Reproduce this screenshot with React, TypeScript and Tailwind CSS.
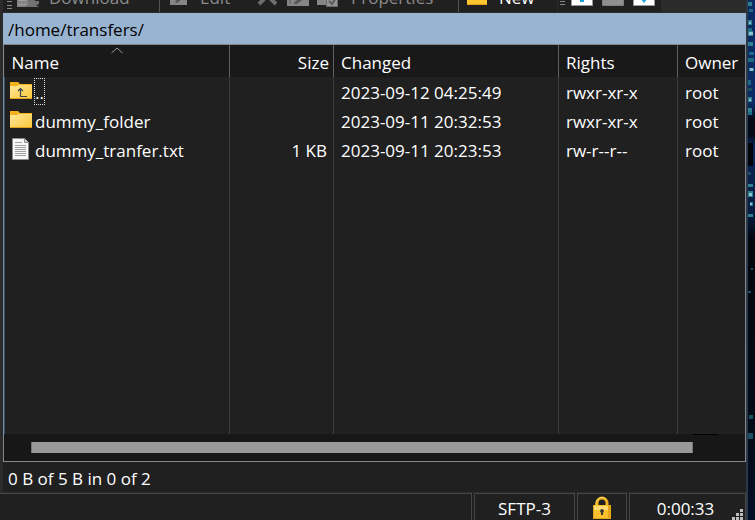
import type { ReactNode } from "react";

type Entry = {
  name: string;
  kind: "parent" | "folder" | "file";
  size: string;
  changed: string;
  rights: string;
  owner: string;
};

const entries: Entry[] = [
  { name: "..", kind: "parent", size: "", changed: "2023-09-12 04:25:49", rights: "rwxr-xr-x", owner: "root" },
  { name: "dummy_folder", kind: "folder", size: "", changed: "2023-09-11 20:32:53", rights: "rwxr-xr-x", owner: "root" },
  { name: "dummy_tranfer.txt", kind: "file", size: "1 KB", changed: "2023-09-11 20:23:53", rights: "rw-r--r--", owner: "root" },
];

const FolderIcon = ({ up = false }: { up?: boolean }) => (
  <svg width="22" height="22" viewBox="0 -3 22 22" className="mt-px shrink-0" aria-hidden="true">
    <defs>
      <linearGradient id="folder" x1="0" y1="0" x2="1" y2="1">
        <stop offset="0" stopColor="#ffe79b" />
        <stop offset="1" stopColor="#fbc938" />
      </linearGradient>
    </defs>
    <path d="M0 0h8l2 2h12v4H0z" fill="#f5b21a" />
    <path d="M0 4h7l2-1h13v14H0z" fill="url(#folder)" />
    <path d="M0 16h22v1H0z" fill="#e0a21c" />
    {up && <path d="M10.500 6.500v8h6.500M8 9l2.500-2.500L13 9" fill="none" stroke="#3d4250" strokeWidth="1.200" />}
  </svg>
);

const FileIcon = () => (
  <svg width="22" height="22" viewBox="0 0 22 22" className="mt-[2px] shrink-0" aria-hidden="true">
    <path d="M2.500.5h12l4 4v17h-16z" fill="#f7f7f7" stroke="#8c8c8c" />
    <path d="M14.500.5v4h4" fill="#d5d5d5" stroke="#8c8c8c" />
    <path d="M5 4.500h7M5 7.500h11M5 9.500h11M5 11.500h11M5 13.500h11M5 15.500h11M5 17.500h11" stroke="#a0a0a0" />
  </svg>
);

const LockIcon = () => (
  <svg width="18" height="24" viewBox="0 0 18 24" role="img" aria-label="Secure connection">
    <path d="M4 11V7a5 5 0 0 1 10 0v4" fill="none" stroke="#efb11c" strokeWidth="3" />
    <path d="M3 10V7a6 6 0 0 1 10-4" fill="none" stroke="#ffd768" />
    <path d="M0 9h18v14H0z" fill="#fbc22b" />
    <path d="M1 10h16v4H1z" fill="#ffda70" />
    <path d="M0 9h1v14H0zM15 9h3v14h-3zM0 22h18v1H0z" fill="#e5a51b" />
    <path d="M9 13a2 2 0 0 1 1 3.700V19H8v-2.300A2 2 0 0 1 9 13z" fill="#3b3a35" />
  </svg>
);

const Grip = () => (
  <svg width="5" height="12" viewBox="0 0 5 12" className="shrink-0" aria-hidden="true">
    <path d="M0 3.500h5M0 7.500h5M0 10.500h5" stroke="#868686" />
  </svg>
);

const ToolButton = ({ icon, children }: { icon: ReactNode; children?: ReactNode }) => (
  <button type="button" className="flex shrink-0 items-end whitespace-nowrap">
    {icon}
    {children}
  </button>
);

const Toolbar = () => (
  <div className="flex h-[13px] shrink-0 items-end overflow-hidden border-b border-[#2d2d2d] bg-[#202020] text-[#8b8b8b]">
    <div className="flex w-[156px] shrink-0 items-end gap-[5px] pb-[2px] pl-1">
      <Grip />
      <ToolButton
        icon={
          <svg width="24" height="20" viewBox="0 0 24 20" className="mr-2" aria-hidden="true">
            <path d="M0 4h14v13H0z" fill="#858585" />
            <path d="M2 14.500h8M2 10.500h8" stroke="#a0a0a0" />
            <path d="M8 8h10v3h4v3l-3 1 3 2H8l4-4z" fill="#727272" />
          </svg>
        }
      >
        Download
      </ToolButton>
    </div>
    <div className="flex w-[98px] shrink-0 items-end border-l border-[#555] pb-[2px] pl-[10px]">
      <ToolButton
        icon={
          <svg width="18" height="20" viewBox="0 0 18 20" className="mr-3" aria-hidden="true">
            <path d="M0 1h17v14H0z" fill="#858585" />
            <path d="M5 12l6-6 2 2-6 5z" fill="#505050" />
          </svg>
        }
      >
        Edit
      </ToolButton>
    </div>
    <div className="flex w-[201px] shrink-0 items-end gap-[8px] pb-[2px]">
      <ToolButton
        icon={
          <svg width="22" height="20" viewBox="0 0 22 20" aria-label="Delete">
            <path d="M2 -3L19 14M19 -3L2 14" stroke="#6e6e6e" strokeWidth="4" />
          </svg>
        }
      />
      <ToolButton
        icon={
          <svg width="22" height="20" viewBox="0 0 22 20" aria-label="Rename">
            <path d="M0 2h22v14H0z" fill="#858585" />
            <path d="M3 8v6M7 13l6-5 2 2-6 4z" fill="#505050" stroke="#606060" />
          </svg>
        }
      />
      <ToolButton
        icon={
          <svg width="22" height="20" viewBox="0 0 22 20" className="mr-3" aria-hidden="true">
            <path d="M0 2h16v13H0z" fill="#858585" />
            <path d="M9.500 4.500h11v12h-11z" fill="#929292" stroke="#6b6b6b" />
            <path d="M12 11l3 3 4-6" fill="none" stroke="#5b5b5b" strokeWidth="2" />
          </svg>
        }
      >
        Properties
      </ToolButton>
    </div>
    <div className="flex w-[99px] shrink-0 items-end border-l border-[#555] pb-[2px] pl-[8px] text-white">
      <ToolButton
        icon={
          <svg width="20" height="20" viewBox="0 0 20 20" className="mr-3" aria-hidden="true">
            <path d="M0 0h20v15H0z" fill="#fdc62f" />
            <path d="M0 14h20v1H0z" fill="#e2a41c" />
          </svg>
        }
      >
        New
      </ToolButton>
    </div>
    <div className="flex shrink-0 items-end gap-[6px] border-l border-[#2b2b2b] pr-[6px] pb-[6px] pl-[2px]">
      <Grip />
      <div className="flex gap-[9px]">
        <ToolButton
          icon={
            <svg width="22" height="20" viewBox="0 0 22 20" aria-label="Select files">
              <path d="M.5.500h21v19H.500z" fill="#fff" stroke="#9a9a9a" />
              <path d="M9 6h4v10H9z" fill="#1ba1dc" />
            </svg>
          }
        />
        <ToolButton
          icon={
            <svg width="22" height="20" viewBox="0 0 22 20" aria-label="Unselect files">
              <path d="M.5.500h21v19H.500z" fill="#8f8f8f" stroke="#7d7d7d" />
            </svg>
          }
        />
        <ToolButton
          icon={
            <svg width="22" height="20" viewBox="0 0 22 20" aria-label="Select all">
              <path d="M.5.500h21v19H.500z" fill="#fff" stroke="#9a9a9a" />
              <path d="M8 13h6l-3 4z" fill="#1ba1dc" />
            </svg>
          }
        />
      </div>
    </div>
    <div className="flex-1 self-stretch bg-[#2b2b2b]" />
  </div>
);

const FileTable = () => (
  <table className="h-full w-full table-fixed border-collapse text-left">
    <colgroup>
      <col className="w-[225px]" />
      <col className="w-[104px]" />
      <col className="w-[225px]" />
      <col className="w-[119px]" />
      <col />
    </colgroup>
    <thead className="bg-[#191919]">
      <tr className="h-8 [&>th]:border-r [&>th]:border-[#606060] [&>th]:p-0 [&>th]:pt-1 [&>th]:font-normal">
        <th className="relative" aria-sort="ascending">
          <span className="pl-[7px]">Name</span>
          <svg width="12" height="7" viewBox="0 0 12 7" className="absolute top-[2px] left-1/2 -translate-x-1/2" aria-hidden="true">
            <path d="M.5 6L6 1l5.500 5" fill="none" stroke="#9a9a9a" />
          </svg>
        </th>
        <th className="text-right">
          <span className="pr-1">Size</span>
        </th>
        <th>
          <span className="pl-[7px]">Changed</span>
        </th>
        <th>
          <span className="pl-[7px]">Rights</span>
        </th>
        <th className="border-r-0!">
          <span className="pl-[7px]">Owner</span>
        </th>
      </tr>
    </thead>
    <tbody className="border-l border-[#2f5378]">
      {entries.map((entry) => (
        <tr
          key={entry.name}
          className="h-[29px] [&>td]:border-r [&>td]:border-[#3a3d41] [&>td]:p-0 [&>td:not(:first-child)]:pt-[2px]"
        >
          <td>
            <div className="flex h-[29px] items-start gap-[2px] pt-px pl-[5px]">
              {entry.kind === "file" ? <FileIcon /> : <FolderIcon up={entry.kind === "parent"} />}
              <span
                className={
                  entry.kind === "parent"
                    ? "h-[27px] border border-dotted border-[#e0e0e0] leading-7"
                    : "h-[27px] border border-transparent leading-7"
                }
              >
                {entry.name}
              </span>
            </div>
          </td>
          <td className="text-right">
            <span className="pr-[6px]">{entry.size}</span>
          </td>
          <td>
            <span className="pl-[7px]">{entry.changed}</span>
          </td>
          <td>
            <span className="pl-[7px]">{entry.rights}</span>
          </td>
          <td className="border-r-0!">
            <span className="pl-[7px]">{entry.owner}</span>
          </td>
        </tr>
      ))}
      <tr aria-hidden="true" className="[&>td]:border-r [&>td]:border-[#3a3d41]">
        <td />
        <td />
        <td />
        <td />
        <td className="border-r-0!" />
      </tr>
    </tbody>
  </table>
);

const StatusBar = () => (
  <footer className="flex h-7 shrink-0 items-stretch gap-[2px] border-t border-[#2c2c2c] text-center leading-[30px] [&>div]:border-t [&>div]:border-r [&>div]:border-[#454545]">
    <div className="flex-1" />
    <div className="w-[101px] border-l">SFTP-3</div>
    <div className="flex w-[50px] justify-center border-l pt-[2px]">
      <LockIcon />
    </div>
    <div className="relative w-[117px] border-l">
      <span className="pr-1">0:00:33</span>
      <svg width="11" height="11" viewBox="0 0 11 11" className="absolute right-[2px] bottom-0" aria-hidden="true">
        <path d="M8 0h3v3H8zM4 4h3v3H4zM8 4h3v3H8zM0 8h3v3H0zM4 8h3v3H4zM8 8h3v3H8z" fill="#bdbdbd" />
      </svg>
    </div>
  </footer>
);

// Strip of desktop wallpaper showing beside the window
const Wallpaper = () => (
  <svg width="9" viewBox="0 0 9 520" preserveAspectRatio="none" className="h-full w-[9px] shrink-0" aria-hidden="true">
    <defs>
      <linearGradient id="night" x1="0" y1="0" x2="0" y2="1">
        <stop offset="0" stopColor="#0a2a62" />
        <stop offset=".2" stopColor="#0a2b66" />
        <stop offset=".23" stopColor="#040a18" />
        <stop offset=".26" stopColor="#040a18" />
        <stop offset=".28" stopColor="#08265a" />
        <stop offset=".41" stopColor="#071c40" />
        <stop offset=".46" stopColor="#02060d" />
        <stop offset=".85" stopColor="#030c18" />
        <stop offset="1" stopColor="#030f28" />
      </linearGradient>
    </defs>
    <path d="M0 0h9v520H0z" fill="url(#night)" />
    <path d="M2 143h5v23H2z" fill="#01040b" />
    <path d="M3 9h4v3H3zM2 28h4v4H2zM3 52h5v3H3zM2 58h6v4H2zM2 80h3v5H2zM2 111h4v4H2z" fill="#1c6b86" />
    <path d="M2 2h4v4H2zM2 20h4v5H2zM2 31h5v5H2zM2 42h5v4H2zM3 68h5v3H3zM2 97h4v5H2zM2 108h4v4H2zM2 184h5v3H2zM2 191h5v6H2zM4 202h3v4H4zM2 214h5v3H2z" fill="#317f92" />
    <path d="M3 22h2v2H3zM3 32h4v3H3zM4 68h3v3H4zM3 99h2v2H3zM3 193h3v3H3zM4 203h2v2H4z" fill="#8bc3cf" />
    <path d="M2 88h4v3H2zM2 172h3v3H2zM5 268h2v2H5zM2 291h3v2H2zM3 415h4v4H3zM2 433h5v6H2z" fill="#1b5064" />
    <path d="M0 0h2v520H0z" fill="#2d3949" />
  </svg>
);

export default function App() {
  return (
    <div className="flex h-screen overflow-hidden bg-[#202020] font-['Open_Sans','Noto_Sans',sans-serif] text-[17px] leading-6 text-white">
      <main className="flex min-w-0 flex-1 flex-col">
        <div className="flex min-h-0 flex-1 flex-col border-l-[3px] border-[#2b2b2b]">
          <Toolbar />
          <div className="flex h-[31px] shrink-0 items-center bg-[#99b4d1] pt-[3px] pl-[5px] text-black">
            /home/transfers/
          </div>
          <section className="flex min-h-0 flex-1 flex-col border border-[#828790]">
            <div className="min-h-0 flex-1">
              <FileTable />
            </div>
            <div className="bg-[#171717] pb-2">
              <div className="mr-[27px] ml-auto h-px w-[25px] bg-black" />
              <div className="mt-[7px] mr-[52px] ml-[27px] h-[11px] border-x border-[#777] bg-[#999]" />
            </div>
          </section>
          <div className="flex h-[30px] shrink-0 items-center pt-[3px] pl-[5px]">0 B of 5 B in 0 of 2</div>
        </div>
        <StatusBar />
      </main>
      <Wallpaper />
    </div>
  );
}
